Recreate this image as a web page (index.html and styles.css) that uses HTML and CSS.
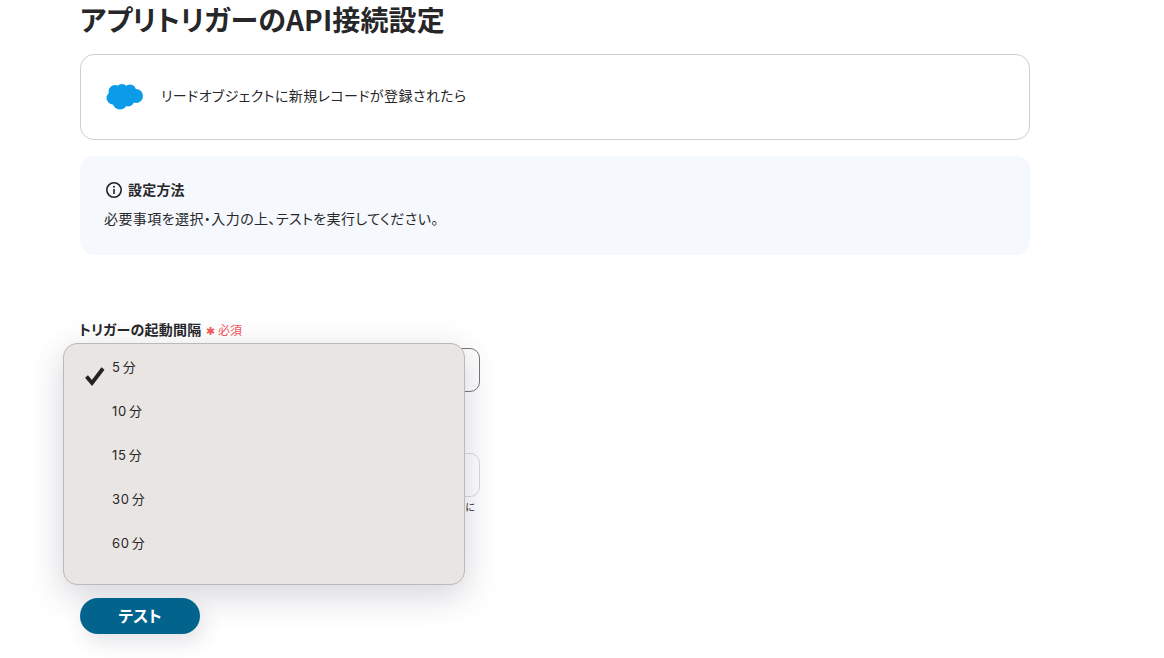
FILE: index.html
```html
<!DOCTYPE html>
<html lang="ja">
<head>
<meta charset="utf-8">
<title>アプリトリガーのAPI接続設定</title>
<link rel="stylesheet" href="styles.css">
</head>
<body>
<main class="page">
  <h1 class="title">アプリトリガーのAPI接続設定</h1>
  <section class="app-card">
    <svg class="logo" width="38" height="28" viewBox="0 0 38 28" aria-hidden="true">
      <g fill="#0b9be8">
        <circle cx="9" cy="8.5" r="6.5"/><circle cx="16" cy="7.5" r="6.5"/><circle cx="24" cy="7.5" r="6"/>
        <circle cx="30" cy="13" r="7"/><circle cx="7" cy="15" r="6.5"/><circle cx="14" cy="19" r="7.5"/>
        <circle cx="22" cy="17" r="6.5"/>
      </g>
    </svg>
    <span class="app-text">リードオブジェクトに新規レコードが登録されたら</span>
  </section>
  <section class="notice">
    <div class="notice-head">
      <svg class="info" width="18" height="18" viewBox="0 0 18 18" aria-hidden="true">
        <circle cx="9" cy="9" r="7.2" fill="none" stroke="#222" stroke-width="1.6"/>
        <rect x="8.2" y="8" width="1.6" height="5" fill="#222"/>
        <circle cx="9" cy="5.8" r="1" fill="#222"/>
      </svg>
      <strong>設定方法</strong>
    </div>
    <p class="notice-body">必要事項を選択・入力の上、テストを実行してください。</p>
  </section>
  <form class="form">
    <label class="field-label">トリガーの起動間隔<span class="req"><span class="star">✱</span>必須</span></label>
    <div class="field-box dark"></div>
    <div class="field-box light"></div>
    <p class="hint"><span>に</span></p>
    <div class="menu">
      <div class="item"><svg class="check" width="22" height="20" viewBox="0 0 22 20" aria-hidden="true"><path d="M2.5 10.5 L8 17 L19 2.5" fill="none" stroke="#222" stroke-width="3.8"/></svg><span>5 分</span></div>
      <div class="item"><span>10 分</span></div>
      <div class="item"><span>15 分</span></div>
      <div class="item"><span>30 分</span></div>
      <div class="item"><span>60 分</span></div>
    </div>
    <button type="button" class="test">テスト</button>
  </form>
</main>
</body>
</html>
```
FILE: styles.css
```css
* { box-sizing: border-box; }
html, body { margin: 0; height: 100%; overflow: hidden; background: #fff; }
body {
  font-family: "Noto Sans CJK JP", "Inter", sans-serif;
  color: #27272a;
  font-feature-settings: "palt";
}
.page { width: 950px; margin-left: 80px; }
.title { margin: -1px 0 1px; height: 54px; font-size: 28px; line-height: 40px; font-weight: 600; letter-spacing: .15px; }
.app-card {
  height: 86px; border: 1px solid #cfcdd0; border-radius: 14px;
  display: flex; align-items: center; gap: 17px; padding: 0 25px 5px;
}
.logo { flex: none; margin-top: 5px; }
.app-text { font-size: 14px; letter-spacing: .43px; }
.notice {
  margin-top: 16px; height: 99px; background: #f5f8fc; border-radius: 14px;
  padding: 24px 24px 0;
}
.notice-head { display: flex; align-items: center; gap: 5px; font-size: 14px; line-height: 20px; padding-left: 1px; letter-spacing: .2px; }
.notice-head strong { font-weight: 600; position: relative; top: -1px; }
.info { flex: none; }
.notice-body { margin: 8px 0 0; font-size: 14px; line-height: 20px; letter-spacing: .42px; }
.form { position: relative; margin-top: 64px; }
.field-label { display: block; font-size: 14px; line-height: 20px; font-weight: 600; margin-left: -1px; letter-spacing: .25px; }
.req { color: #f4555a; font-size: 12px; font-weight: 400; margin-left: 4px; letter-spacing: .1px; }
.star { font: 400 11px "DejaVu Sans", sans-serif; margin-right: 3px; }
.field-box { width: 400px; height: 44px; border-radius: 10px; border: 1px solid #77757a; margin-top: 8px; }
.field-box.light { border-color: #d8d8dc; margin-top: 61px; }
.hint { margin: 3px 0 0; width: 395px; text-align: right; font-size: 10px; line-height: 14px; }
.menu {
  position: absolute; left: -17px; top: 24px; width: 402px; height: 242px;
  background: #e9e5e3; border: 1px solid #bdb9b9; border-radius: 14px;
  box-shadow: 0 10px 34px rgba(60, 60, 90, .22);
}
.item { position: relative; height: 44px; padding-left: 48px; font-family: "Inter", "Noto Sans CJK JP", sans-serif; font-size: 13px; line-height: 46px; letter-spacing: .6px; word-spacing: -2px; }
.check { position: absolute; left: 20px; top: 22px; }
.test {
  display: block; margin-top: 84px; width: 120px; height: 36px; border: 0; border-radius: 18px; padding: 0 0 2px;
  background: #02648c; color: #fff; font: 600 16px/32px "Noto Sans CJK JP", sans-serif;
  font-feature-settings: "palt";
  box-shadow: 4px 8px 20px rgba(60, 60, 90, .14);
  position: relative;
}
```
